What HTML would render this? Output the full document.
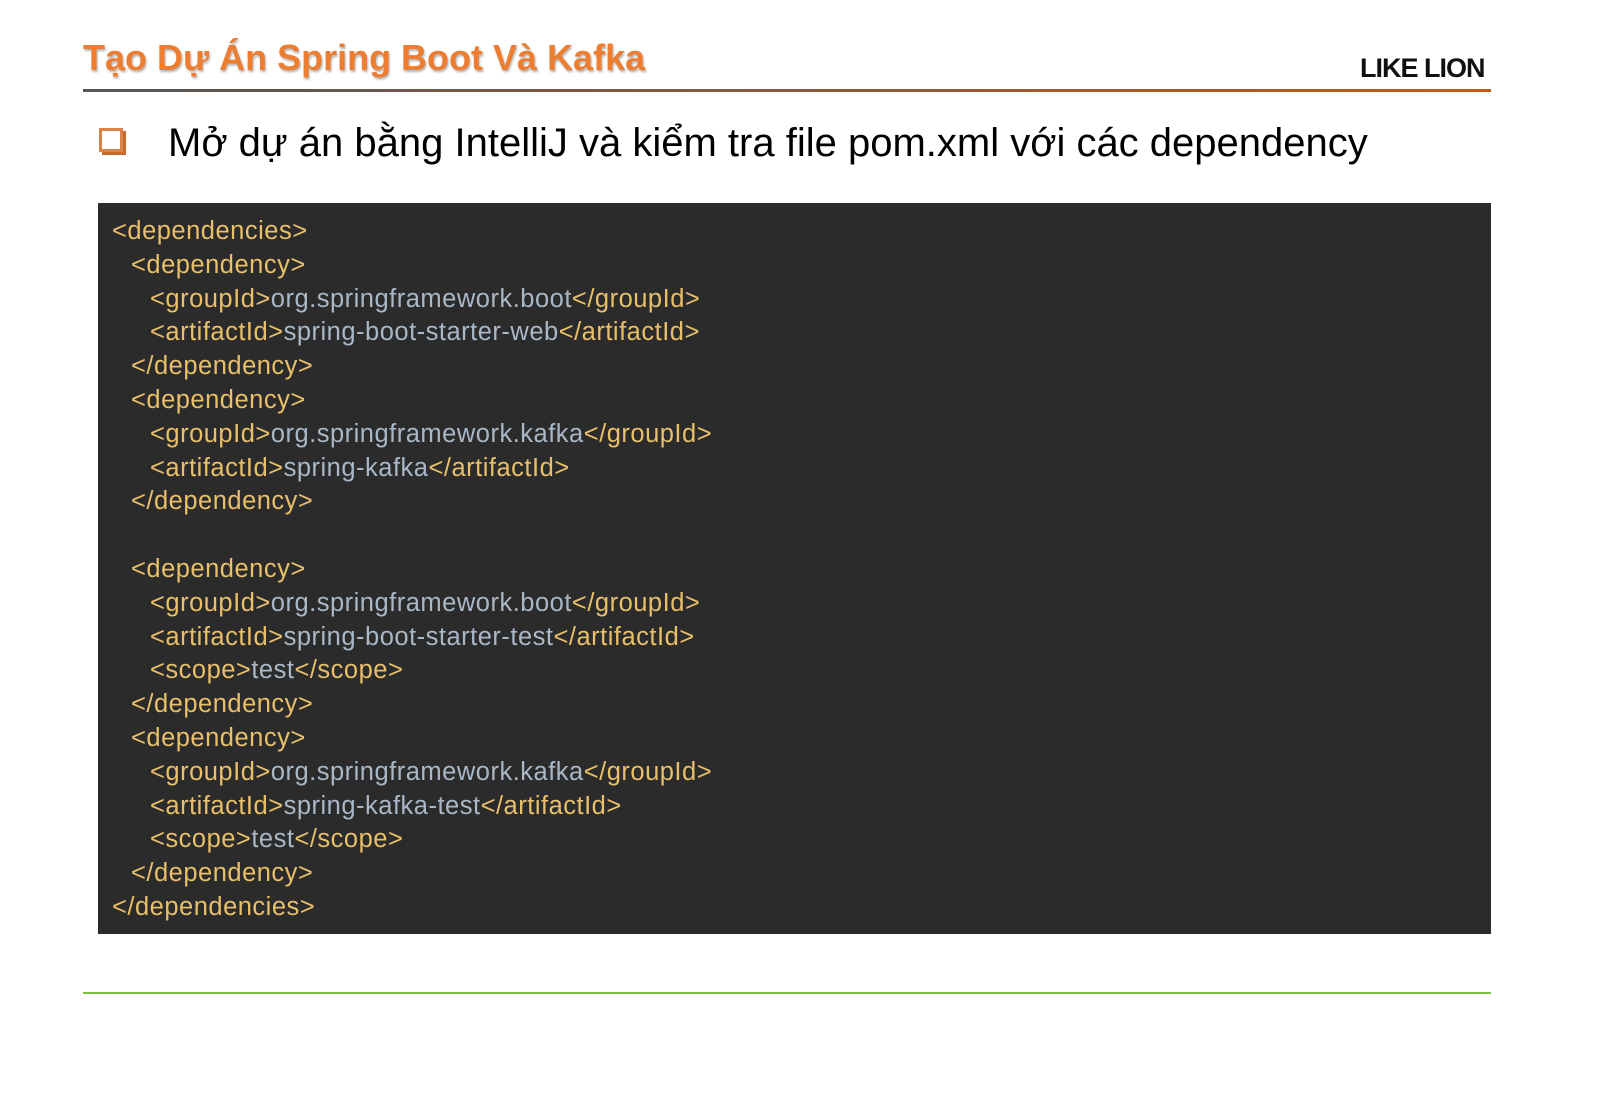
<!DOCTYPE html>
<html><head><meta charset="utf-8"><style>
html,body{margin:0;width:1600px;height:1108px;overflow:hidden}
body{background:#fff;position:relative;font-family:"Liberation Sans",sans-serif}
.t{position:absolute;left:83px;top:37px;font-size:36px;font-weight:bold;color:#ed7d31;text-shadow:1px 2px 2px rgba(0,0,0,.3)}
.logo{position:absolute;left:1360px;top:53px;font-size:27px;font-weight:bold;letter-spacing:-1px;color:#111}
.hl{position:absolute;left:83px;top:89px;width:1408px;height:3px;background:linear-gradient(90deg,#555 0%,#8a5a3c 50%,#c55a11 100%)}
.box{position:absolute;left:99px;top:128px;width:24px;height:24px;border:3px solid #d9834a;box-sizing:border-box;box-shadow:3px 3px 0 #c86a2c}
.b{position:absolute;left:168px;top:121px;font-size:40px;color:#000}
.code{position:absolute;left:98px;top:203px;width:1393px;height:731px;background:#2b2b2b}
.c{position:absolute;left:112px;top:215px;font-size:25.5px;line-height:33.8px;color:#e8bf6a;letter-spacing:0.5px}
.c div{height:33.8px;white-space:pre}
.c i{font-style:normal;color:#a9b7c6}
.l1{padding-left:19px}.l2{padding-left:38px}
.gl{position:absolute;left:83px;top:992px;width:1408px;height:2px;background:#7cc242}
</style></head><body>
<div class="t">Tạo Dự Án Spring Boot Và Kafka</div>
<div class="logo">LIKE LION</div>
<div class="hl"></div>
<div class="box"></div>
<div class="b">Mở dự án bằng IntelliJ và kiểm tra file pom.xml với các dependency</div>
<div class="code"></div>
<div class="c"><div>&lt;dependencies&gt;</div><div class="l1">&lt;dependency&gt;</div><div class="l2">&lt;groupId&gt;<i>org.springframework.boot</i>&lt;/groupId&gt;</div><div class="l2">&lt;artifactId&gt;<i>spring-boot-starter-web</i>&lt;/artifactId&gt;</div><div class="l1">&lt;/dependency&gt;</div><div class="l1">&lt;dependency&gt;</div><div class="l2">&lt;groupId&gt;<i>org.springframework.kafka</i>&lt;/groupId&gt;</div><div class="l2">&lt;artifactId&gt;<i>spring-kafka</i>&lt;/artifactId&gt;</div><div class="l1">&lt;/dependency&gt;</div><div></div><div class="l1">&lt;dependency&gt;</div><div class="l2">&lt;groupId&gt;<i>org.springframework.boot</i>&lt;/groupId&gt;</div><div class="l2">&lt;artifactId&gt;<i>spring-boot-starter-test</i>&lt;/artifactId&gt;</div><div class="l2">&lt;scope&gt;<i>test</i>&lt;/scope&gt;</div><div class="l1">&lt;/dependency&gt;</div><div class="l1">&lt;dependency&gt;</div><div class="l2">&lt;groupId&gt;<i>org.springframework.kafka</i>&lt;/groupId&gt;</div><div class="l2">&lt;artifactId&gt;<i>spring-kafka-test</i>&lt;/artifactId&gt;</div><div class="l2">&lt;scope&gt;<i>test</i>&lt;/scope&gt;</div><div class="l1">&lt;/dependency&gt;</div><div>&lt;/dependencies&gt;</div></div>
<div class="gl"></div>
</body></html>
